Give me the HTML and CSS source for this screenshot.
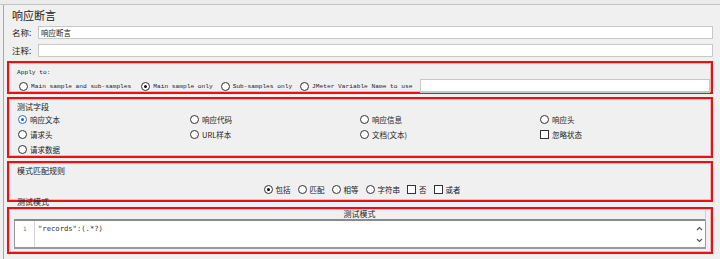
FILE: index.html
```html
<!DOCTYPE html>
<html lang="zh-CN">
<head>
	<meta charset="UTF-8">
	<title>响应断言</title>
	<link rel="stylesheet" href="styles.css">
</head>
<body>
	<!-- 顶部工具条残留 -->
	<div class="topbar"></div>
	<div class="frame">
		<div class="title">响应断言</div>
		<div class="field">
			<span class="label">名称:</span>
			<span class="input">响应断言</span>
		</div>
		<div class="field">
			<span class="label">注释:</span>
			<span class="input"></span>
		</div>

		<!-- Apply to -->
		<div class="box box-apply">
			<div class="legend mono">Apply to:</div>
			<div class="apply-row mono">
				<span class="opt"><i class="radio"></i>Main sample and sub-samples</span>
				<span class="opt"><i class="radio on"></i>Main sample only</span>
				<span class="opt"><i class="radio"></i>Sub-samples only</span>
				<span class="opt"><i class="radio"></i>JMeter Variable Name to use</span>
				<span class="input apply-input"></span>
			</div>
		</div>

		<!-- 测试字段 -->
		<div class="box box-fields">
			<div class="legend">测试字段</div>
			<div class="grid">
				<span class="opt"><i class="radio on blue"></i>响应文本</span>
				<span class="opt"><i class="radio"></i>响应代码</span>
				<span class="opt"><i class="radio"></i>响应信息</span>
				<span class="opt"><i class="radio"></i>响应头</span>
				<span class="opt"><i class="radio"></i>请求头</span>
				<span class="opt"><i class="radio"></i>URL样本</span>
				<span class="opt"><i class="radio"></i>文档(文本)</span>
				<span class="opt"><i class="check"></i>忽略状态</span>
				<span class="opt"><i class="radio"></i>请求数据</span>
			</div>
		</div>

		<!-- 模式匹配规则 -->
		<div class="box box-rules">
			<div class="legend">模式匹配规则</div>
			<div class="rules">
				<span class="opt"><i class="radio on"></i>包括</span>
				<span class="opt"><i class="radio"></i>匹配</span>
				<span class="opt"><i class="radio"></i>相等</span>
				<span class="opt"><i class="radio"></i>字符串</span>
				<span class="opt"><i class="check"></i>否</span>
				<span class="opt"><i class="check"></i>或者</span>
			</div>
		</div>

		<div class="outer-legend">测试模式</div>
		<!-- 测试模式 -->
		<div class="box box-pattern">
			<div class="table-head">测试模式</div>
			<div class="editor">
				<div class="gutter">1</div>
				<div class="code">"records":(.*?)</div>
				<div class="scroll">
					<svg width="7" height="5" viewBox="0 0 7 5"><path d="M1 4 L3.5 1.5 L6 4" fill="none" stroke="#555" stroke-width="1.1"/></svg>
					<svg width="7" height="5" viewBox="0 0 7 5"><path d="M1 1 L3.5 3.5 L6 1" fill="none" stroke="#555" stroke-width="1.1"/></svg>
				</div>
			</div>
		</div>
	</div>
</body>
</html>
```

FILE: styles.css
```css
*{
	padding: 0;
	margin: 0;
	box-sizing: border-box;
}
body{
	background: #f0f0f0;
	font-family: "Noto Sans CJK SC", "Liberation Sans", sans-serif;
	font-size: 8px;
	color: #222;
	width: 720px;
	height: 259px;
	overflow: hidden;
}
/*顶部*/
.topbar{
	height: 5px;
	border-bottom: 1px solid #c4c4c4;
	background: #ebebeb;
}
/*主容器*/
.frame{
	margin-left: 3px;
	border-left: 1px solid #a8a8a8;
	padding: 2px 7px 0 3px;
	height: 254px;
}
.title{
	font-size: 11px;
	line-height: 16px;
	padding-left: 5px;
}
.field{
	display: flex;
	align-items: center;
	height: 18px;
	padding-left: 5px;
}
.field .label{
	width: 26px;
	font-size: 8.5px;
}
.input{
	flex: 1;
	height: 13px;
	background: #fff;
	border: 1px solid #c8c8c8;
	font-size: 7.5px;
	line-height: 11px;
	padding-left: 2px;
}
/*红框*/
.box{
	border: 2px solid #e3121c;
	outline: 1px solid #f3b4b4;
	outline-offset: -3px;
	margin-top: 3px;
}
.legend{
	padding-left: 8px;
	line-height: 11px;
}
.mono{
	font-family: "Liberation Mono", monospace;
	font-size: 6.2px;
}
.opt{
	display: inline-flex;
	align-items: center;
	white-space: nowrap;
}
.radio{
	display: inline-block;
	width: 9px;
	height: 9px;
	border: 1px solid #333;
	border-radius: 50%;
	background: #fff;
	margin-right: 3px;
	position: relative;
}
.radio.on::after{
	content: "";
	position: absolute;
	left: 2px;
	top: 2px;
	width: 3px;
	height: 3px;
	border-radius: 50%;
	background: #111;
}
.radio.blue{
	border-color: #2a6fc9;
}
.radio.blue::after{
	background: #1565d0;
}
.check{
	display: inline-block;
	width: 9px;
	height: 9px;
	border: 1px solid #333;
	background: #fff;
	margin-right: 3px;
}
/*apply*/
.box-apply{
	height: 33px;
	margin-top: 2px;
	padding-top: 4px;
}
.apply-row{
	display: flex;
	align-items: center;
	gap: 8px;
	padding-left: 10px;
	height: 16px;
}
.apply-row .opt:nth-child(2){
	margin-left: 2px;
}
.apply-input{
	height: 14px;
	margin-right: 1px;
}
/*测试字段*/
.box-fields{
	height: 61px;
	padding-top: 2px;
}
.grid{
	display: grid;
	grid-template-columns: 172px 170px 180px 1fr;
	grid-auto-rows: 15px;
	align-items: center;
	padding-left: 9px;
	font-size: 7.5px;
}
/*规则*/
.box-rules{
	height: 41px;
	padding-top: 2px;
}
.rules{
	display: flex;
	justify-content: center;
	align-items: center;
	gap: 7px;
	height: 20px;
	margin-top: 3px;
	padding-left: 4px;
	font-size: 7.5px;
}
.outer-legend{
	position: relative;
	z-index: 1;
	line-height: 9px;
	margin: -5px 0 -4px 10px;
	font-size: 8px;
}
/*测试模式*/
.box-pattern{
	height: 47px;
	margin-top: 5px;
	padding: 0 5px 0 5px;
}
.table-head{
	text-align: center;
	line-height: 10px;
	height: 12px;
	font-size: 8px;
	border-right: 1px solid #cfcfcf;
	border-bottom: 2px solid #8a8a8a;
}
.editor{
	display: flex;
	height: 28px;
	background: #fff;
	border-left: 1px solid #9a9a9a;
	border-bottom: 2px solid #9a9a9a;
	border-right: 1px solid #9a9a9a;
}
.gutter{
	width: 20px;
	border-right: 1px solid #d4d4d4;
	font-family: "DejaVu Sans Mono", monospace;
	font-size: 6px;
	color: #777;
	padding: 4px 0 0 8px;
}
.code{
	flex: 1;
	font-family: "DejaVu Sans Mono", monospace;
	font-size: 7.2px;
	color: #333;
	padding: 3px 0 0 3px;
}
.scroll{
	width: 12px;
	display: flex;
	flex-direction: column;
	justify-content: space-between;
	align-items: center;
	padding: 5px 0 4px;
}
```
